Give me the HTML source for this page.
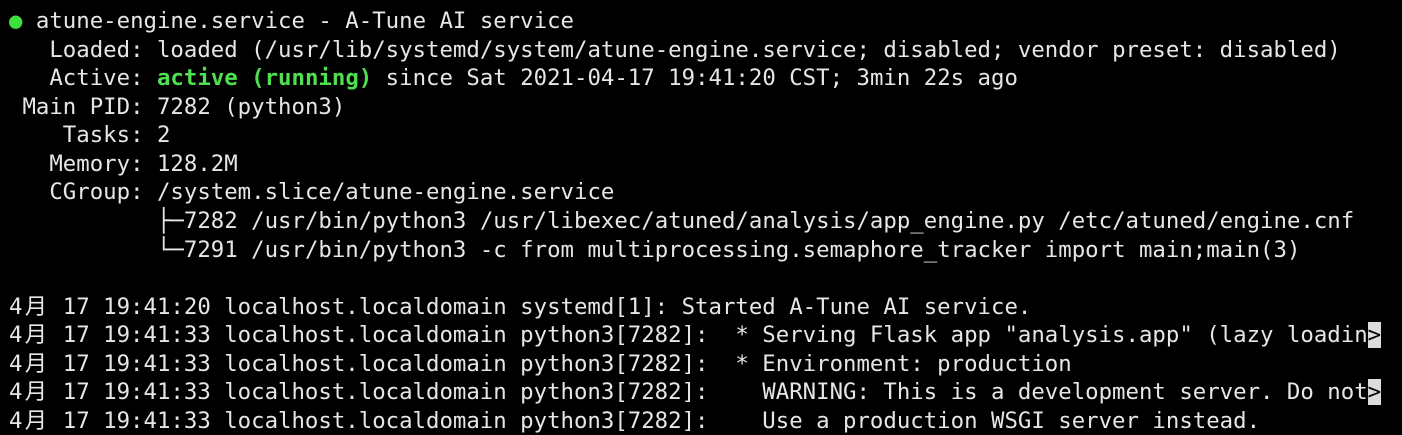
<!DOCTYPE html>
<html><head><meta charset="utf-8"><style>
html,body{margin:0;padding:0;background:#000;width:1402px;height:434px;overflow:hidden}
.t{position:absolute;left:9px;top:7px;font-family:"DejaVu Sans Mono","Liberation Mono",monospace;font-size:22.35px;color:#e6e6e6}
.t div{height:28.57px;line-height:28.57px;overflow:visible;white-space:pre}
.g{color:#4fe04f;font-weight:bold}
.d{color:#3ee03e}
.c{display:inline-block;width:26.9px;font-family:"Noto Sans CJK SC",sans-serif;text-align:center;line-height:20px;vertical-align:baseline}
.cur{background:#dcdcdc;color:#000}
</style></head><body>
<div class="t">
<div><span class="d">●</span> atune-engine.service - A-Tune AI service</div>
<div>   Loaded: loaded (/usr/lib/systemd/system/atune-engine.service; disabled; vendor preset: disabled)</div>
<div>   Active: <span class="g">active (running)</span> since Sat 2021-04-17 19:41:20 CST; 3min 22s ago</div>
<div> Main PID: 7282 (python3)</div>
<div>    Tasks: 2</div>
<div>   Memory: 128.2M</div>
<div>   CGroup: /system.slice/atune-engine.service</div>
<div>           ├─7282 /usr/bin/python3 /usr/libexec/atuned/analysis/app_engine.py /etc/atuned/engine.cnf</div>
<div>           └─7291 /usr/bin/python3 -c from multiprocessing.semaphore_tracker import main;main(3)</div>
<div> </div>
<div>4<span class="c">月</span> 17 19:41:20 localhost.localdomain systemd[1]: Started A-Tune AI service.</div>
<div>4<span class="c">月</span> 17 19:41:33 localhost.localdomain python3[7282]:  * Serving Flask app "analysis.app" (lazy loadin<span class="cur">&gt;</span></div>
<div>4<span class="c">月</span> 17 19:41:33 localhost.localdomain python3[7282]:  * Environment: production</div>
<div>4<span class="c">月</span> 17 19:41:33 localhost.localdomain python3[7282]:    WARNING: This is a development server. Do not<span class="cur">&gt;</span></div>
<div>4<span class="c">月</span> 17 19:41:33 localhost.localdomain python3[7282]:    Use a production WSGI server instead.</div>
</div>
</body></html>
